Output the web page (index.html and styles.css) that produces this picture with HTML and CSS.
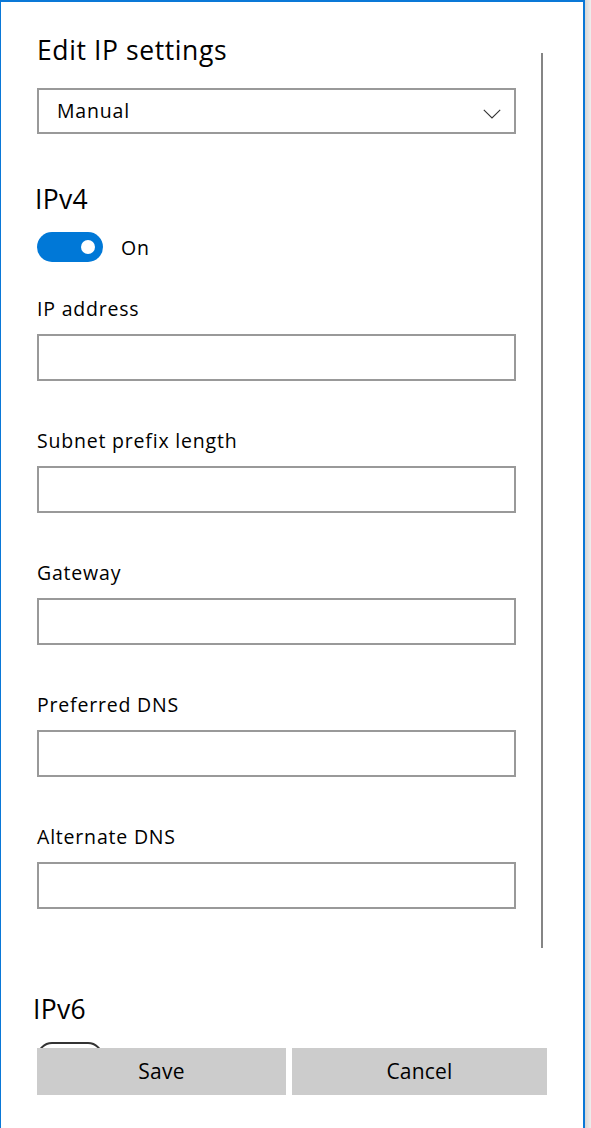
FILE: index.html
```html
<!DOCTYPE html>
<html lang="en">
<head>
<meta charset="utf-8">
<title>Edit IP settings</title>
<link rel="stylesheet" href="styles.css">
</head>
<body>
<div class="page">
  <div class="window">
    <div class="scroll">
      <h1 class="title">Edit IP settings</h1>
      <div class="select">
        <span class="select-value">Manual</span>
        <svg class="chevron" width="18" height="10" viewBox="0 0 18 10"><polyline points="0.8,0.8 9,9 17.2,0.8" fill="none" stroke="#333" stroke-width="1.1"/></svg>
      </div>

      <h2 class="section">IPv4</h2>
      <div class="toggle-row">
        <div class="toggle on"><span class="knob"></span></div>
        <span class="toggle-label">On</span>
      </div>

      <div class="field first">
        <div class="label">IP address</div>
        <div class="input"></div>
      </div>
      <div class="field">
        <div class="label">Subnet prefix length</div>
        <div class="input"></div>
      </div>
      <div class="field">
        <div class="label">Gateway</div>
        <div class="input"></div>
      </div>
      <div class="field">
        <div class="label">Preferred DNS</div>
        <div class="input"></div>
      </div>
      <div class="field">
        <div class="label">Alternate DNS</div>
        <div class="input"></div>
      </div>

      <h2 class="section ipv6">IPv6</h2>
      <div class="toggle-row">
        <div class="toggle off"></div>
      </div>

      <div class="scrollbar"></div>
    </div>
    <div class="footer">
      <button class="btn save">Save</button>
      <button class="btn cancel">Cancel</button>
    </div>
  </div>
  <div class="shadow"></div>
</div>
</body>
</html>
```

FILE: styles.css
```css
html, body {
  margin: 0;
  padding: 0;
  background: #fff;
}

body {
  font-family: "Open Sans", "Noto Sans", sans-serif;
  color: #000;
}

.page {
  display: flex;
  height: 1128px;
  overflow: hidden;
}

.window {
  width: 585px;
  box-sizing: border-box;
  border-top: 2px solid #0a78d7;
  border-left: 1px solid #0a78d7;
  border-right: 2px solid #0a78d7;
  background: #fff;
  display: flex;
  flex-direction: column;
}

.shadow {
  flex: 1;
  background: linear-gradient(to right, #d6d6d6, #eeeeee);
}

.scroll {
  height: 1046px;
  flex: none;
  overflow: hidden;
  position: relative;
  box-sizing: border-box;
  padding: 33px 0 0 36px;
}

.title {
  margin: 0;
  font-size: 26.5px;
  line-height: 31px;
  font-weight: 400;
  letter-spacing: 0.6px;
}

.select {
  margin-top: 22px;
  width: 479px;
  height: 46px;
  box-sizing: border-box;
  border: 2px solid #999;
  display: flex;
  align-items: flex-start;
  justify-content: space-between;
  padding: 9px 13px 0 18px;
}

.select-value {
  font-size: 19.5px;
  line-height: 24px;
  letter-spacing: 0.8px;
}

.chevron {
  margin-top: 10px;
}

.section {
  margin: 49px 0 0 -2px;
  font-size: 26.5px;
  line-height: 32px;
  font-weight: 400;
  letter-spacing: 0.3px;
}

.section.ipv6 {
  margin-top: 84px;
  margin-left: -4px;
}

.toggle-row {
  margin-top: 17px;
  display: flex;
  align-items: flex-start;
}

.toggle {
  width: 66px;
  height: 30px;
  box-sizing: border-box;
  border-radius: 15px;
  position: relative;
}

.toggle.on {
  background: #0078d7;
}

.toggle.off {
  border: 2px solid #333;
}

.knob {
  position: absolute;
  width: 14px;
  height: 14px;
  border-radius: 50%;
  top: 8px;
  right: 8px;
  background: #fff;
}

.toggle-label {
  margin: 4px 0 0 18px;
  font-size: 19.5px;
  line-height: 24px;
  letter-spacing: 0.8px;
}

.field {
  margin-top: 48px;
}

.field.first {
  margin-top: 35px;
}

.label {
  font-size: 19.5px;
  line-height: 24px;
  letter-spacing: 0.8px;
}

.input {
  margin-top: 13px;
  width: 479px;
  height: 47px;
  box-sizing: border-box;
  border: 2px solid #999;
}

.scrollbar {
  position: absolute;
  left: 540px;
  top: 51px;
  width: 2px;
  height: 895px;
  background: #858585;
}

.footer {
  flex: 1;
  display: flex;
  gap: 6px;
  padding-left: 36px;
  background: #fff;
}

.btn {
  height: 47px;
  border: none;
  margin: 0;
  padding: 0;
  background: #ccc;
  font-family: "Open Sans", "Noto Sans", sans-serif;
  font-size: 21px;
  line-height: 47px;
  letter-spacing: 0.2px;
  color: #000;
}

.btn.save {
  width: 249px;
}

.btn.cancel {
  width: 255px;
}
```
